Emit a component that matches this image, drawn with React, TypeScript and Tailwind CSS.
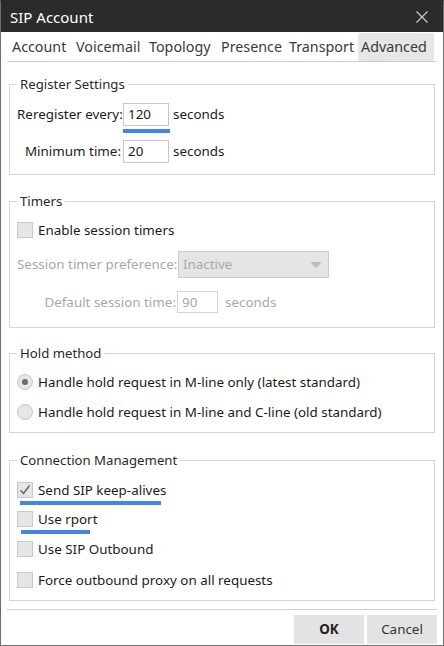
import React from 'react';

const tabs = [
  { label: 'Account', w: 'w-[64px]' },
  { label: 'Voicemail', w: 'w-[73px]' },
  { label: 'Topology', w: 'w-[72px]' },
  { label: 'Presence', w: 'w-[68px]' },
  { label: 'Transport', w: 'w-[72px]' },
  { label: 'Advanced', w: 'w-[76px]', active: true },
];

function Checkbox({ checked = false }: { checked?: boolean }) {
  return (
    <span className="w-[16px] h-[16px] border border-[#c9c9c9] bg-[#e6e6e6] flex items-center justify-center shrink-0">
      {checked && (
        <svg width="12" height="12" viewBox="0 0 12 12">
          <path d="M1.5 6.2 L4.5 9.5 L10.5 1.5" fill="none" stroke="#6e6e6e" strokeWidth="1.6" />
        </svg>
      )}
    </span>
  );
}

function Radio({ checked = false }: { checked?: boolean }) {
  return (
    <span className="w-[16px] h-[16px] rounded-full border border-[#c9c9c9] bg-[#e6e6e6] flex items-center justify-center shrink-0">
      {checked && <span className="w-[6px] h-[6px] rounded-full bg-[#6a6a6a]" />}
    </span>
  );
}

function Group({ title, className, children }: { title: string; className: string; children: React.ReactNode }) {
  return (
    <fieldset className={`border border-[#d4d4d4] pl-[7px] ${className}`}>
      <legend className="px-[3px] text-[13.2px] leading-[20px] text-[#2a2a2a]">{title}</legend>
      {children}
    </fieldset>
  );
}

export default function App() {
  return (
    <div className="w-[444px] h-[646px] border border-[#6f6f6f] border-t-[#2b2b2b] bg-white flex flex-col font-['Noto_Sans',sans-serif] text-[#1b1b1b] text-[13.4px]">
      {/* title bar */}
      <div className="h-[31px] bg-[#2b2b2b] flex items-center justify-between pl-[9px] pr-[15px]">
        <span className="text-white text-[15px] leading-[20px]">SIP Account</span>
        <svg width="12" height="12" viewBox="0 0 12 12">
          <path d="M0.5 0.5 L11.5 11.5 M11.5 0.5 L0.5 11.5" stroke="#cfcfcf" strokeWidth="1.1" />
        </svg>
      </div>

      {/* tabs */}
      <div className="mt-[1px] mx-[6px] h-[29px] border-b border-[#cccccc] flex pl-[2px] text-[14.3px] text-[#3a3a3a]">
        {tabs.map((t) => (
          <div
            key={t.label}
            className={`${t.w} h-[28px] px-[3px] flex items-center whitespace-nowrap ${t.active ? 'bg-[#e6e6e6]' : ''}`}
          >
            {t.label}
          </div>
        ))}
      </div>

      <div className="ml-[8px] w-[426px] flex flex-col">
        <Group title="Register Settings" className="mt-[12px] pt-[9px] pb-[11px]">
          <div className="flex items-center h-[23px]">
            <span className="w-[104px] text-right whitespace-nowrap">Reregister every:</span>
            <div className="relative ml-[2px]">
              <div className="w-[46px] h-[23px] border border-[#c8c8c8] px-[4px] flex items-center">120</div>
              <div className="absolute left-0 top-[26px] w-[47px] h-[4px] bg-[#4285e6]" />
            </div>
            <span className="ml-[4px]">seconds</span>
          </div>
          <div className="flex items-center h-[23px] mt-[14px]">
            <span className="w-[104px] text-right whitespace-nowrap">Minimum time:</span>
            <div className="ml-[2px] w-[46px] h-[23px] border border-[#c8c8c8] px-[4px] flex items-center">20</div>
            <span className="ml-[4px]">seconds</span>
          </div>
        </Group>

        <Group title="Timers" className="mt-[16px] pt-[9px] pb-[14px]">
          <div className="flex items-center h-[20px] gap-[5px]">
            <Checkbox />
            <span>Enable session timers</span>
          </div>
          <div className="flex items-center mt-[11px] text-[#a8a8a8]">
            <span className="w-[159px] text-right whitespace-nowrap">Session timer preference:</span>
            <div className="ml-[2px] w-[151px] h-[27px] border border-[#cccccc] bg-[#e5e5e5] flex items-center justify-between pl-[4px] pr-[6px]">
              <span>Inactive</span>
              <svg width="12" height="6" viewBox="0 0 12 6">
                <path d="M0 0 L12 0 L6 6 Z" fill="#bdbdbd" />
              </svg>
            </div>
          </div>
          <div className="flex items-center mt-[13px] text-[#a8a8a8]">
            <span className="w-[159px] text-right whitespace-nowrap">Default session time:</span>
            <div className="ml-[1px] w-[41px] h-[22px] border border-[#d4d4d4] px-[4px] flex items-center">90</div>
            <span className="ml-[7px]">seconds</span>
          </div>
        </Group>

        <Group title="Hold method" className="mt-[15px] pt-[9px] pb-[10px]">
          <div className="flex items-center h-[20px] gap-[5px]">
            <Radio checked />
            <span>Handle hold request in M-line only (latest standard)</span>
          </div>
          <div className="flex items-center h-[20px] gap-[5px] mt-[10px]">
            <Radio />
            <span>Handle hold request in M-line and C-line (old standard)</span>
          </div>
        </Group>

        <Group title="Connection Management" className="mt-[17px] pt-[10px] pb-[10px]">
          <div className="relative flex items-center h-[20px] gap-[5px]">
            <Checkbox checked />
            <span>Send SIP keep-alives</span>
            <div className="absolute left-[3px] top-[21px] w-[141px] h-[4px] bg-[#4285e6]" />
          </div>
          <div className="relative flex items-center h-[20px] gap-[5px] mt-[9px]">
            <Checkbox />
            <span>Use rport</span>
            <div className="absolute left-[4px] top-[21px] w-[69px] h-[4px] bg-[#4285e6]" />
          </div>
          <div className="flex items-center h-[20px] gap-[5px] mt-[10px]">
            <Checkbox />
            <span>Use SIP Outbound</span>
          </div>
          <div className="flex items-center h-[20px] gap-[5px] mt-[11px]">
            <Checkbox />
            <span>Force outbound proxy on all requests</span>
          </div>
        </Group>
      </div>

      <div className="mt-[8px] mx-[6px] h-px bg-[#cfcfcf]" />

      <div className="mt-[5px] mr-[6px] flex justify-end gap-[3px]">
        <button className="w-[70px] h-[29px] bg-[#e3e3e3] font-bold text-[#222]">OK</button>
        <button className="w-[70px] h-[29px] bg-[#e3e3e3] text-[#333]">Cancel</button>
      </div>
    </div>
  );
}
